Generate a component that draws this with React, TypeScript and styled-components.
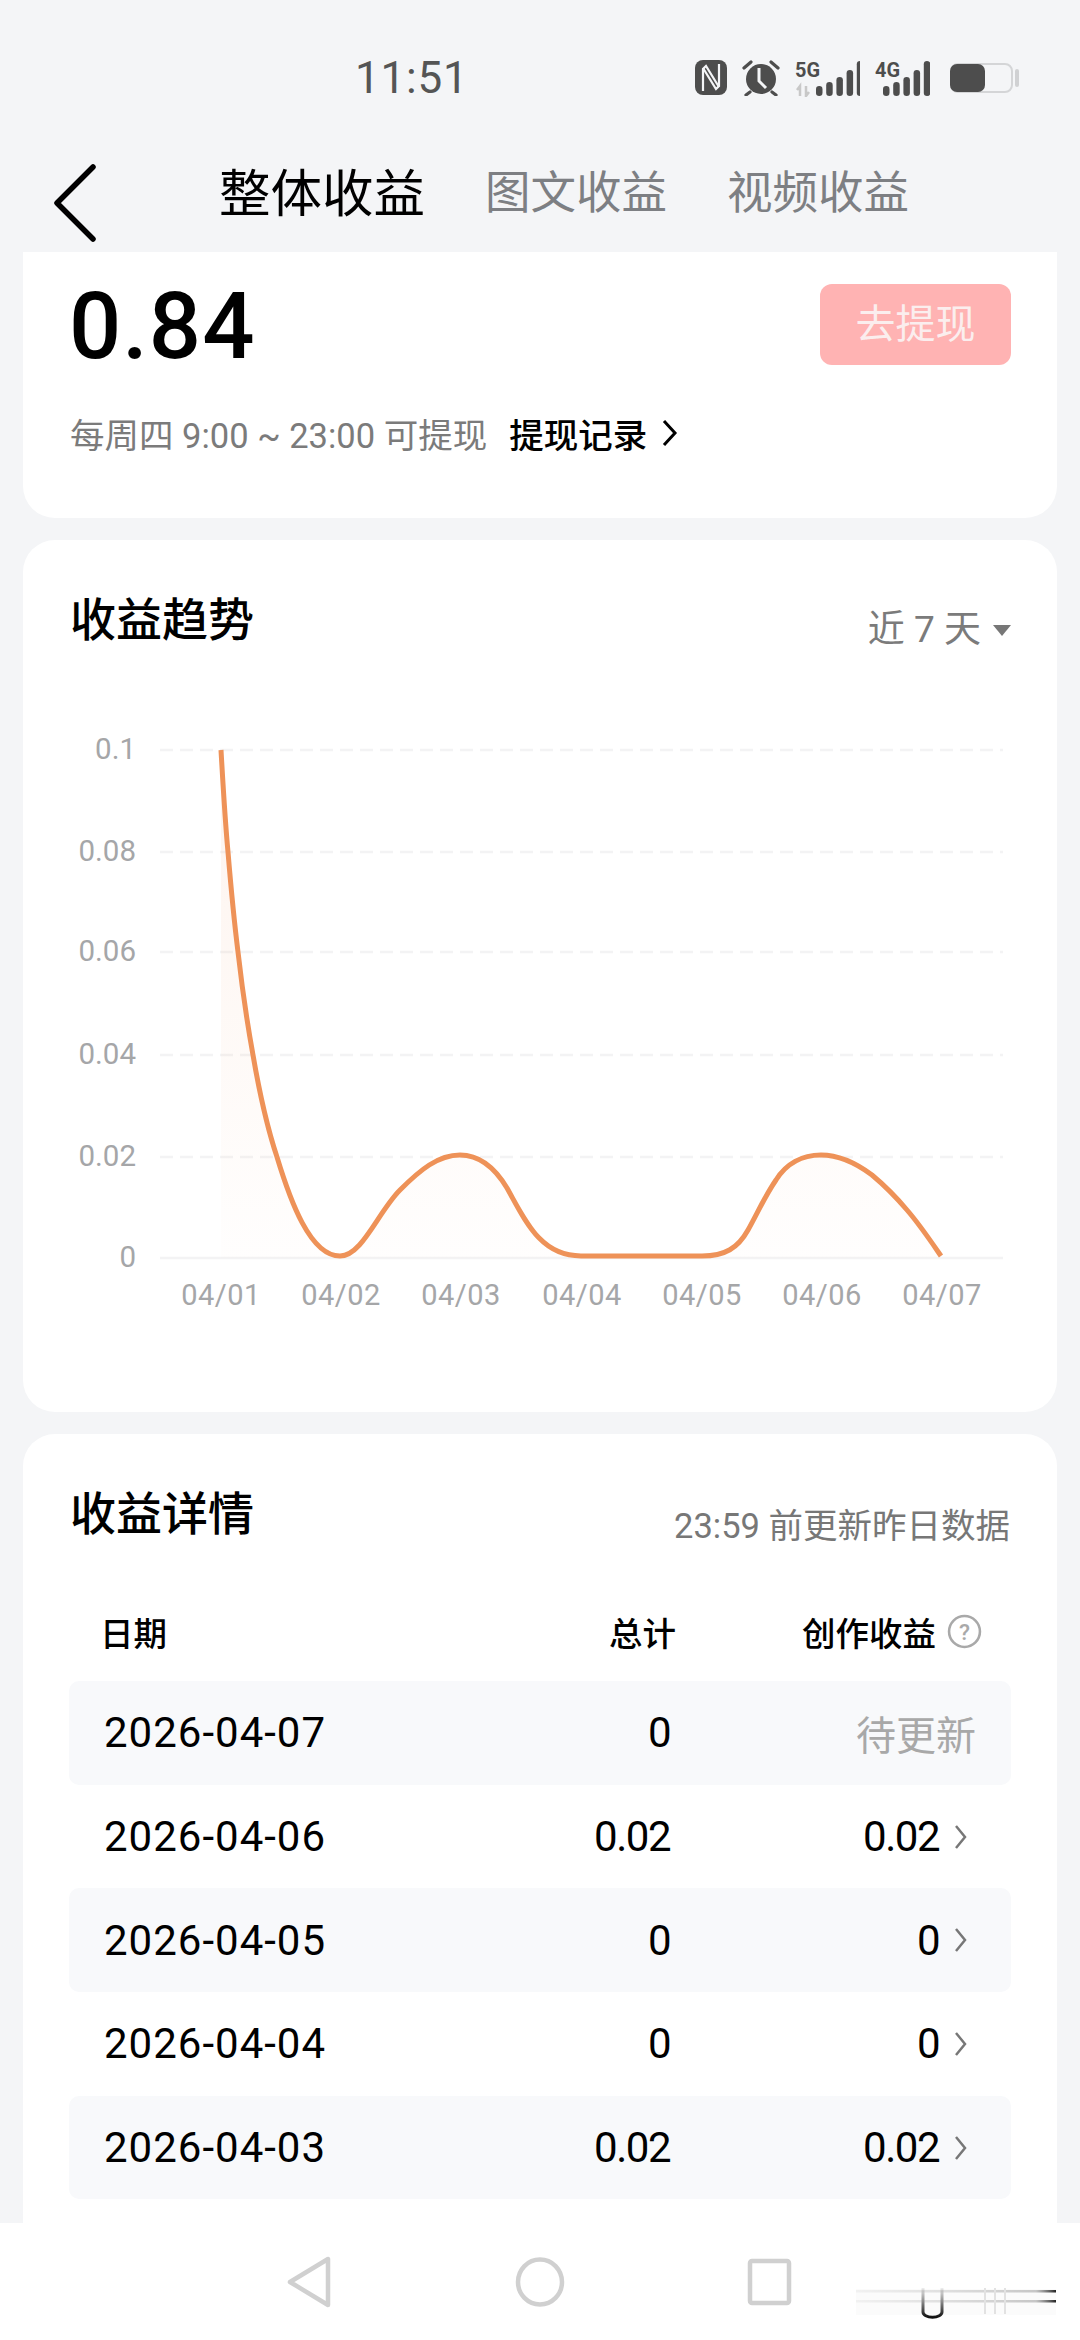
import React from "react";
import styled, { createGlobalStyle } from "styled-components";

const FONT = `Roboto, "Noto Sans CJK SC", sans-serif`;

const GlobalStyle = createGlobalStyle`
  html, body {
    margin: 0;
    padding: 0;
    background: #f4f5f7;
  }
  * {
    box-sizing: border-box;
  }
`;

const Page = styled.div`
  width: 1080px;
  height: 2340px;
  display: flex;
  flex-direction: column;
  overflow: hidden;
  background: #f4f5f7;
  font-family: ${FONT};
`;

const StatusBar = styled.div`
  height: 130px;
  flex: none;
  display: grid;
  grid-template-columns: 355px 340px 1fr;
  align-items: center;
`;

const Clock = styled.div`
  grid-column: 2;
  font-size: 44px;
  color: #555;
  letter-spacing: 0.8px;
  line-height: 52px;
  margin-top: 25px;
  height: 52px;
`;

const StatusIcons = styled.div`
  display: flex;
  align-items: center;
  gap: 15px;
  margin-top: 25px;
  height: 52px;
`;

const BatteryIcon = styled.svg`
  width: 69px;
  height: 30px;
  margin-left: 5px;
`;

const TopNav = styled.div`
  height: 122px;
  flex: none;
  display: flex;
  align-items: center;
  padding-left: 52px;
`;

const BackIcon = styled.svg`
  width: 46px;
  height: 80px;
  flex: none;
  margin: 24px 121px 0 0;
`;

const Tabs = styled.div`
  display: flex;
  align-items: center;
  gap: 60px;
  margin-top: -4px;
`;

const Tab = styled.div<{ $active?: boolean }>`
  font-size: ${(p) => (p.$active ? 51.5 : 45.5)}px;
  color: ${(p) => (p.$active ? "#000" : "#7d7f83")};
`;

const Content = styled.div`
  flex: 1;
  min-height: 0;
  overflow: hidden;
  display: flex;
  flex-direction: column;
  gap: 22px;
  padding: 0 23px;
`;

const Card = styled.section`
  background: #fff;
  border-radius: 32px;
  flex: none;
`;

const BalanceCard = styled(Card)`
  height: 266px;
  border-radius: 0 0 32px 32px;
  padding: 32px 46px 0 47px;
`;

const BalanceRow = styled.div`
  display: flex;
  justify-content: space-between;
  align-items: center;
  height: 81px;
`;

const Amount = styled.div`
  font-size: 92px;
  font-weight: 500;
  color: #000;
  letter-spacing: 1px;
  line-height: 81px;
  margin: 3px 0 0 -1px;
`;

const WithdrawButton = styled.div`
  width: 191px;
  height: 81px;
  border-radius: 12px;
  background: #ffb3b3;
  color: #fbeeee;
  font-size: 40px;
  padding-bottom: 8px;
  display: flex;
  align-items: center;
  justify-content: center;
`;

const HintRow = styled.div`
  display: flex;
  align-items: center;
  margin-top: 46px;
  height: 44px;
`;

const HintText = styled.span`
  font-size: 34.5px;
  color: #7b7b7b;
`;

const RecordLink = styled.span`
  font-size: 34.5px;
  font-weight: 500;
  color: #000;
  margin-left: 22px;
`;

const RecordArrow = styled.svg`
  width: 18px;
  height: 30px;
  margin-left: 14px;
`;

const TrendCard = styled(Card)`
  height: 872px;
  padding-top: 52px;
`;

const CardHead = styled.div`
  display: flex;
  justify-content: space-between;
  align-items: flex-end;
  padding: 0 46px 0 47px;
`;

const DetailHead = styled(CardHead)`
  padding: 0 1px;
`;

const CardTitle = styled.h2`
  margin: 0;
  font-size: 46px;
  font-weight: 500;
  color: #000;
  line-height: 56px;
`;

const RangePicker = styled.div`
  display: flex;
  align-items: center;
  gap: 12px;
  font-size: 37px;
  color: #7b7b7b;
  line-height: 52px;
  margin-bottom: -8px;
`;

const RangeCaret = styled.span`
  width: 0;
  height: 0;
  border-left: 9px solid transparent;
  border-right: 9px solid transparent;
  border-top: 11px solid #777;
`;

const Chart = styled.svg`
  display: block;
  width: 1034px;
  height: 640px;
  margin-top: 52px;
`;

const DetailCard = styled(Card)`
  padding: 52px 46px 0 46px;
  height: 900px;
`;

const DetailNote = styled.div`
  font-size: 34.5px;
  color: #777;
  line-height: 44px;
  margin-bottom: -6px;
`;

const TableHead = styled.div`
  display: grid;
  grid-template-columns: 1fr 306px;
  align-items: center;
  height: 60px;
  margin-top: 59px;
  padding: 0 29px 0 31px;
  font-size: 33.5px;
  font-weight: 500;
  color: #000;
`;

const HeadLeft = styled.div`
  display: flex;
  justify-content: space-between;
`;

const HeadRight = styled.div`
  display: flex;
  justify-content: flex-end;
  align-items: center;
  gap: 11px;
`;

const HelpIcon = styled.svg`
  width: 35px;
  height: 35px;
`;

const Rows = styled.div`
  margin-top: 20px;
`;

const Row = styled.div<{ $shaded: boolean }>`
  display: grid;
  grid-template-columns: 1fr 306px;
  align-items: center;
  height: 103.7px;
  padding: 0 35px;
  border-radius: 10px;
  background: ${(p) => (p.$shaded ? "#f8f9fb" : "#fff")};
  font-size: 42px;
  color: #000;
`;

const RowLeft = styled.div`
  display: flex;
  justify-content: space-between;
`;

const RowRight = styled.div`
  display: flex;
  justify-content: flex-end;
  align-items: center;
`;

const DateCell = styled.span`
  letter-spacing: 1px;
`;

const Amt = styled.span`
  letter-spacing: -1.5px;
`;

const Pending = styled.span`
  color: #a8a8a8;
  font-size: 40px;
`;

const RowArrow = styled.svg`
  width: 13px;
  height: 26px;
  margin-left: 15px;
  margin-right: 9px;
`;

const BottomNav = styled.div`
  height: 117px;
  flex: none;
  position: relative;
  background: #fff;
  display: flex;
  justify-content: center;
  padding-top: 33px;
  gap: 182px;
`;

const NavIcon = styled.svg`
  width: 50px;
  height: 52px;
`;

const Smudge = styled.svg`
  position: absolute;
  left: 856px;
  top: 62px;
  width: 200px;
  height: 36px;
`;

const yTicks = [
  { label: "0.1", y: 750 },
  { label: "0.08", y: 852 },
  { label: "0.06", y: 952 },
  { label: "0.04", y: 1055 },
  { label: "0.02", y: 1157 },
  { label: "0", y: 1258 },
];

const xTicks = [
  { label: "04/01", x: 221 },
  { label: "04/02", x: 341 },
  { label: "04/03", x: 461 },
  { label: "04/04", x: 582 },
  { label: "04/05", x: 702 },
  { label: "04/06", x: 822 },
  { label: "04/07", x: 942 },
];

const CURVE =
  "M221 750 C223 785 225 820 228 852 C231 888 234 920 238 952 C242 987 247 1022 253 1055 C259 1090 267 1127 277 1157 C290 1200 310 1256 340 1256 C362 1256 378 1212 400 1190 C420 1170 438 1155 460 1155 C480 1155 495 1168 507 1188 C525 1220 540 1256 581 1256 L702 1256 C725 1256 738 1248 748 1230 C758 1212 765 1196 776 1180 C786 1164 802 1155 821 1155 C840 1155 856 1163 872 1175 C884 1185 896 1197 907 1210 C920 1225 930 1240 941 1256";

const detailRows = [
  { date: "2026-04-07", total: "0", income: null },
  { date: "2026-04-06", total: "0.02", income: "0.02" },
  { date: "2026-04-05", total: "0", income: "0" },
  { date: "2026-04-04", total: "0", income: "0" },
  { date: "2026-04-03", total: "0.02", income: "0.02" },
];

const barHeights = [10, 14, 19, 26, 35];

function Signal({ level, barsFrom, pitch, width }: { level: string; barsFrom: number; pitch: number; width: number }) {
  return (
    <svg width={width} height="38" viewBox={`0 0 ${width} 38`}>
      <text x="0" y="18" fontSize="20" fontWeight="700" fill="#4d4d4d" textLength="25" lengthAdjust="spacingAndGlyphs" fontFamily="Roboto, sans-serif">
        {level}
      </text>
      {level === "5G" && (
        <path d="M5 37V27l-3 4M11 27v10l3-4" stroke="#c8c8c8" strokeWidth="2.5" fill="none" />
      )}
      {barHeights.map((h, i) => (
        <rect key={i} x={barsFrom + i * pitch} y={37 - h} width="6.5" height={h} rx="3.2" fill="#4d4d4d" />
      ))}
    </svg>
  );
}

export default function App() {
  return (
    <Page>
      <GlobalStyle />
      <StatusBar>
        <Clock>11:51</Clock>
        <StatusIcons>
          <svg width="32" height="35" viewBox="0 0 32 35">
            <rect x="0" y="0" width="32" height="35" rx="8" fill="#4d4d4d" />
            <path d="M8 31V9l3-3 13 21" fill="none" stroke="#f4f5f7" strokeWidth="2.2" />
            <path d="M24 4v22l-3 3L8 8" fill="none" stroke="#f4f5f7" strokeWidth="2.2" />
          </svg>
          <svg width="38" height="37" viewBox="0 0 38 37">
            <circle cx="19" cy="20" r="15" fill="#4d4d4d" />
            <path d="M17 9v13l7 7" fill="none" stroke="#f4f5f7" strokeWidth="3" />
            <path d="M2 9l7-6M36 9l-7-6M8 33l-4 3M30 33l4 3" stroke="#4d4d4d" strokeWidth="3.2" strokeLinecap="round" />
          </svg>
          <Signal level="5G" barsFrom={21} pitch={10.2} width={65} />
          <Signal level="4G" barsFrom={8} pitch={10.2} width={55} />
          <BatteryIcon viewBox="0 0 69 30">
            <rect x="1" y="1" width="61" height="28" rx="7" fill="none" stroke="#d4d5d7" strokeWidth="2" />
            <rect x="0" y="1" width="35" height="28" rx="7" fill="#4d4d4d" />
            <rect x="65" y="6" width="4" height="18" rx="2" fill="#d0d1d3" />
          </BatteryIcon>
        </StatusIcons>
      </StatusBar>

      <TopNav>
        <BackIcon viewBox="0 0 46 80">
          <path d="M41 4L5 40l36 36" fill="none" stroke="#000" strokeWidth="5.5" strokeLinecap="round" strokeLinejoin="round" />
        </BackIcon>
        <Tabs>
          <Tab $active>整体收益</Tab>
          <Tab>图文收益</Tab>
          <Tab>视频收益</Tab>
        </Tabs>
      </TopNav>

      <Content>
        <BalanceCard>
          <BalanceRow>
            <Amount>0.84</Amount>
            <WithdrawButton>去提现</WithdrawButton>
          </BalanceRow>
          <HintRow>
            <HintText>每周四 9:00 ~ 23:00 可提现</HintText>
            <RecordLink>提现记录</RecordLink>
            <RecordArrow viewBox="0 0 18 30">
              <path d="M3 3l11 12L3 27" fill="none" stroke="#000" strokeWidth="3" />
            </RecordArrow>
          </HintRow>
        </BalanceCard>

        <TrendCard>
          <CardHead>
            <CardTitle>收益趋势</CardTitle>
            <RangePicker>
              近 7 天<RangeCaret />
            </RangePicker>
          </CardHead>
          <Chart viewBox="23 700 1034 640">
            <defs>
              <linearGradient id="area" x1="0" y1="0" x2="0" y2="1">
                <stop offset="0" stopColor="#f09058" stopOpacity="0.1" />
                <stop offset="1" stopColor="#f09058" stopOpacity="0.01" />
              </linearGradient>
            </defs>
            {yTicks.map((t) => (
              <g key={t.label}>
                <line
                  x1="160"
                  x2="1003"
                  y1={t.y}
                  y2={t.y}
                  stroke="#f3f3f4"
                  strokeWidth="2.5"
                  strokeDasharray={t.y === 1258 ? undefined : "13 7"}
                />
                <text x="136" y={t.y + 9} textAnchor="end" fontSize="29.5" fill="#a5a6a8" fontFamily={FONT}>
                  {t.label}
                </text>
              </g>
            ))}
            <path d={`${CURVE} L941 1258 L221 1258 Z`} fill="url(#area)" />
            <path d={CURVE} fill="none" stroke="#ee9258" strokeWidth="5" />
            {xTicks.map((t) => (
              <text key={t.label} x={t.x} y="1305" textAnchor="middle" fontSize="29" letterSpacing="0.5" fill="#a5a6a8" fontFamily={FONT}>
                {t.label}
              </text>
            ))}
          </Chart>
        </TrendCard>

        <DetailCard>
          <DetailHead>
            <CardTitle>收益详情</CardTitle>
            <DetailNote>23:59 前更新昨日数据</DetailNote>
          </DetailHead>
          <TableHead>
            <HeadLeft>
              <span>日期</span>
              <span>总计</span>
            </HeadLeft>
            <HeadRight>
              创作收益
              <HelpIcon viewBox="0 0 34 34">
                <circle cx="17" cy="17" r="15" fill="none" stroke="#a9a9a9" strokeWidth="2.5" />
                <text x="17" y="25" textAnchor="middle" fontSize="22" fill="#a9a9a9" fontFamily={FONT}>
                  ?
                </text>
              </HelpIcon>
            </HeadRight>
          </TableHead>
          <Rows>
            {detailRows.map((row, i) => (
              <Row key={row.date} $shaded={i % 2 === 0}>
                <RowLeft>
                  <DateCell>{row.date}</DateCell>
                  <Amt>{row.total}</Amt>
                </RowLeft>
                <RowRight>
                  {row.income === null ? (
                    <Pending>待更新</Pending>
                  ) : (
                    <>
                      <Amt>{row.income}</Amt>
                      <RowArrow viewBox="0 0 13 26">
                        <path d="M2 2l9 11-9 11" fill="none" stroke="#777" strokeWidth="2.5" />
                      </RowArrow>
                    </>
                  )}
                </RowRight>
              </Row>
            ))}
          </Rows>
        </DetailCard>
      </Content>

      <BottomNav>
        <NavIcon viewBox="0 0 50 52">
          <path d="M45 3v46L7 26z" fill="none" stroke="#d0d0d0" strokeWidth="4.5" strokeLinejoin="round" />
        </NavIcon>
        <NavIcon viewBox="0 0 50 52">
          <ellipse cx="25" cy="26" rx="22" ry="22.5" fill="none" stroke="#d0d0d0" strokeWidth="4.5" />
        </NavIcon>
        <NavIcon viewBox="0 0 50 52">
          <rect x="3" y="5" width="39" height="42" rx="2" fill="none" stroke="#d0d0d0" strokeWidth="4.5" />
        </NavIcon>
        <Smudge viewBox="0 0 200 36">
          <defs>
            <linearGradient id="smudgeV" x1="0" y1="0" x2="0" y2="1">
              <stop offset="0" stopColor="#222" stopOpacity="0.08" />
              <stop offset="1" stopColor="#111" stopOpacity="1" />
            </linearGradient>
            <linearGradient id="smudgeH" x1="0" y1="0" x2="1" y2="0">
              <stop offset="0" stopColor="#999" stopOpacity="0.1" />
              <stop offset="0.9" stopColor="#777" stopOpacity="0.4" />
              <stop offset="1" stopColor="#222" stopOpacity="1" />
            </linearGradient>
          </defs>
          <rect x="0" y="4" width="200" height="26" fill="#f8f8f8" opacity="0.6" />
          <path d="M67 3v24a9 5 0 0 0 19 0V3" fill="none" stroke="url(#smudgeV)" strokeWidth="3" />
          <rect x="0" y="5" width="200" height="2.5" fill="url(#smudgeH)" />
          <rect x="0" y="15" width="200" height="2.5" fill="url(#smudgeH)" />
          <path d="M129 3v26M139 3v26M149 3v26" stroke="#e2e2e2" strokeWidth="2" />
        </Smudge>
      </BottomNav>
    </Page>
  );
}
